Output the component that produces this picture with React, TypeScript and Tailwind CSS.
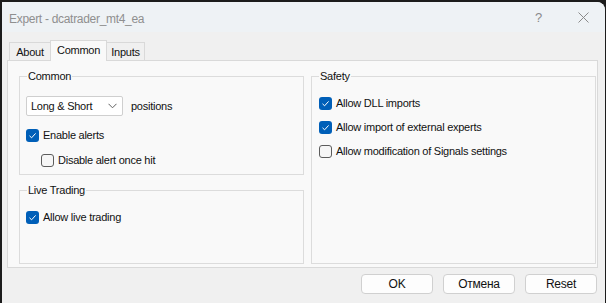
import React, { useState } from 'react';

const Check: React.FC<{ checked: boolean; label: string; onToggle: () => void }> = ({ checked, label, onToggle }) => (
  <label className="flex items-center h-[14px] cursor-default select-none" onClick={onToggle}>
    {checked ? (
      <span className="w-[13px] h-[13px] rounded-[3px] bg-[#005fb8] flex items-center justify-center">
        <svg width="9" height="9" viewBox="0 0 9 9">
          <path d="M1.5 4.8 L3.6 6.8 L7.6 2.4" fill="none" stroke="#fff" strokeWidth="1" />
        </svg>
      </span>
    ) : (
      <span className="w-[13px] h-[13px] rounded-[3px] border border-[#5c5c5c] bg-[#f6f6f6]" />
    )}
    <span className="ml-[4px] text-[#111]">{label}</span>
  </label>
);

const Group: React.FC<{ title: string; className: string; children: React.ReactNode }> = ({ title, className, children }) => (
  <div className={`relative border border-[#dcdcdc] ${className}`}>
    <span className="absolute -top-[8px] left-[7px] bg-[#f9f9f9] px-[1px] leading-[14px] text-[#111]">{title}</span>
    {children}
  </div>
);

const tabs = [
  { name: 'About', w: 'w-[42px]' },
  { name: 'Common', w: 'w-[57px]' },
  { name: 'Inputs', w: 'w-[39px]' },
];

const App: React.FC = () => {
  const [tab, setTab] = useState('Common');
  const [flags, setFlags] = useState({
    alerts: true,
    disableOnce: false,
    live: true,
    dll: true,
    external: true,
    signals: false,
  });
  const toggle = (k: keyof typeof flags) => setFlags((p) => ({ ...p, [k]: !p[k] }));

  return (
    <div className="w-[606px] h-[303px] bg-[#1c1c1c] pl-[2px] pt-[2px] overflow-hidden font-['Liberation_Sans',sans-serif] text-[11px] tracking-[-0.25px]">
      <div className="w-[603px] h-[301px] bg-[#f0f0f0] rounded-tr-[8px] flex flex-col">
        {/* title bar */}
        <div className="h-[30px] bg-[#eef2f5] rounded-tr-[8px] flex items-center pl-[7px] pr-[16px]">
          <span className="text-[12px] text-[#8f8f8f] mt-[3px] tracking-[-0.3px]">Expert - dcatrader_mt4_ea</span>
          <span className="ml-auto text-[13px] text-[#8a8a8a] mt-[1px]">?</span>
          <svg className="ml-[36px]" width="11" height="11" viewBox="0 0 11 11">
            <path d="M0.5 0.5 L10.5 10.5 M10.5 0.5 L0.5 10.5" stroke="#8a8a8a" strokeWidth="1" />
          </svg>
        </div>

        {/* tabs */}
        <div className="flex items-end h-[28px] pl-[7px]">
          {tabs.map((t, i) =>
            t.name === tab ? (
              <button
                key={t.name}
                onClick={() => setTab(t.name)}
                className={`${t.w} h-[21px] border border-b-0 border-[#d9d9d9] bg-[#f9f9f9] -mb-px relative z-10 text-[#111] leading-[16px] pb-[3px] ${i ? '-ml-px' : ''}`}
              >
                {t.name}
              </button>
            ) : (
              <button
                key={t.name}
                onClick={() => setTab(t.name)}
                className={`${t.w} h-[18px] border border-b-0 border-[#d9d9d9] bg-[#f0f0f0] text-[#111] leading-[18px] ${i ? '-ml-px' : ''}`}
              >
                {t.name}
              </button>
            )
          )}
        </div>

        {/* page */}
        <div className="ml-[5px] w-[591px] h-[208px] border border-[#d9d9d9] bg-[#f9f9f9] flex gap-[7px] pl-[11px] pt-[15px]">
          <div className="flex flex-col gap-[15px]">
            <Group title="Common" className="w-[285px] h-[99px] pl-[6px] pt-[19px]">
              <div className="flex items-center">
                <div className="w-[97px] h-[20px] border border-[#cfcfcf] bg-white rounded-[2px] flex items-center pl-[4px] pr-[5px]">
                  <span className="text-[#111]">Long &amp; Short</span>
                  <svg className="ml-auto" width="9" height="6" viewBox="0 0 9 6">
                    <path d="M0.5 0.8 L4.5 4.8 L8.5 0.8" fill="none" stroke="#606060" strokeWidth="1" />
                  </svg>
                </div>
                <span className="ml-[8px] text-[#111]">positions</span>
              </div>
              <div className="mt-[12px]">
                <Check checked={flags.alerts} label="Enable alerts" onToggle={() => toggle('alerts')} />
              </div>
              <div className="mt-[11px] ml-[15px]">
                <Check checked={flags.disableOnce} label="Disable alert once hit" onToggle={() => toggle('disableOnce')} />
              </div>
            </Group>
            <Group title="Live Trading" className="w-[285px] h-[74px] pl-[6px] pt-[19px]">
              <Check checked={flags.live} label="Allow live trading" onToggle={() => toggle('live')} />
            </Group>
          </div>
          <Group title="Safety" className="w-[285px] h-[188px] pl-[7px] pt-[19px] flex flex-col gap-[10px]">
            <Check checked={flags.dll} label="Allow DLL imports" onToggle={() => toggle('dll')} />
            <Check checked={flags.external} label="Allow import of external experts" onToggle={() => toggle('external')} />
            <Check checked={flags.signals} label="Allow modification of Signals settings" onToggle={() => toggle('signals')} />
          </Group>
        </div>

        {/* buttons */}
        <div className="flex justify-end gap-[10px] pr-[8px] mt-[6px]">
          {['OK', 'Отмена', 'Reset'].map((b) => (
            <button
              key={b}
              className="w-[72px] h-[20px] rounded-[4px] border border-[#d0d0d0] bg-[#fdfdfd] text-[12px] text-[#111]"
            >
              {b}
            </button>
          ))}
        </div>
      </div>
    </div>
  );
};

export default App;
